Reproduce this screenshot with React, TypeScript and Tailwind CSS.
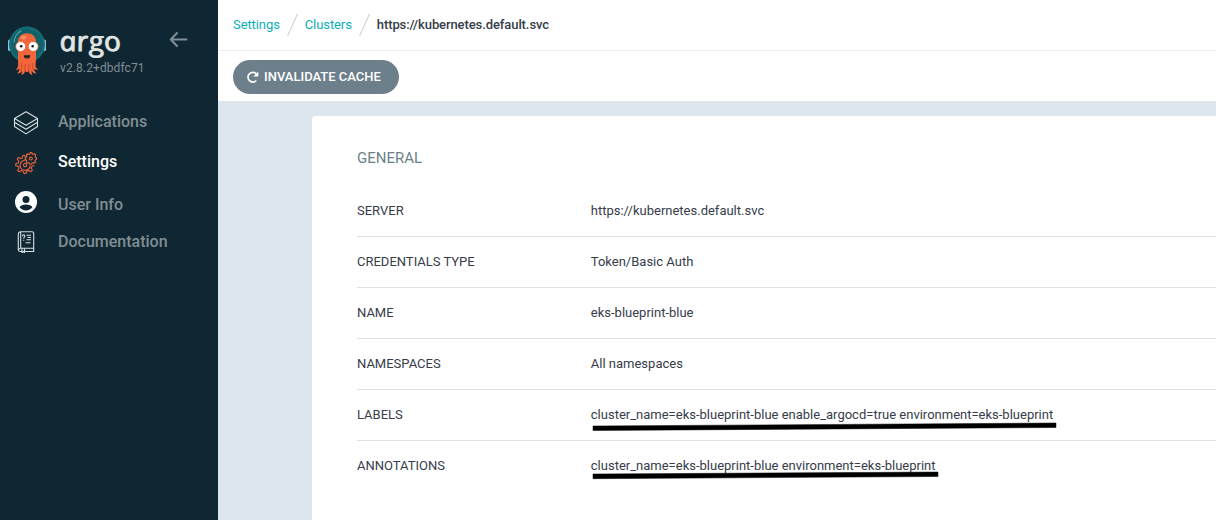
import React from 'react';

const details: { label: string; value: string; mark?: { width: number; top: number; points: string } }[] = [
  { label: 'SERVER', value: 'https://kubernetes.default.svc' },
  { label: 'CREDENTIALS TYPE', value: 'Token/Basic Auth' },
  { label: 'NAME', value: 'eks-blueprint-blue' },
  { label: 'NAMESPACES', value: 'All namespaces' },
  {
    label: 'LABELS',
    value: 'cluster_name=eks-blueprint-blue enable_argocd=true environment=eks-blueprint',
    mark: { width: 466, top: 32, points: '2,4 465,1 465,5.500 2,8.500' },
  },
  {
    label: 'ANNOTATIONS',
    value: 'cluster_name=eks-blueprint-blue environment=eks-blueprint',
    mark: { width: 348, top: 30, points: '2,3 347,1 347,5.500 2,7.700' },
  },
];

function Octopus() {
  return (
    <svg className="h-[52px] w-10 shrink-0" viewBox="0 0 40 52">
      <rect x="1" y="14.500" width="4" height="11.500" rx="1.500" fill="#8fc0dc" />
      <rect x="35" y="14.500" width="4" height="11.500" rx="1.500" fill="#8fc0dc" />
      <circle cx="20" cy="19.500" r="18" fill="#146b73" />
      <circle cx="20" cy="19.500" r="15.600" fill="#10626a" />
      <path d="M7 17c.6-5 3.200-9 7-11" fill="none" stroke="#5c9ca2" strokeWidth="1.200" strokeLinecap="round" />
      <path
        d="M20 8.200c-5.800 0-9 3.500-9 9V34c0 3 .3 5 0 7-.3 2-1.500 3-2.500 3.700 1.700.4 3-.1 4-.9-.1 1.700-.9 3.200-2.500 4.500 2.400.3 4.200-.8 5-2.600.1 1.700-.2 3-1 4.300 2.500-.3 3.800-2 4.200-4.500.3 1.500.8 1.500 1.600 1.500s1.300 0 1.600-1.500c.4 2.500 1.700 4.200 4.200 4.500-.8-1.300-1.100-2.600-1-4.300.8 1.800 2.600 2.900 5 2.600-1.600-1.300-2.400-2.800-2.500-4.500 1 .8 2.300 1.300 4 .9-1-.7-2.200-1.700-2.500-3.700-.3-2 .4-4 .4-7V17.200c0-5.500-3.200-9-9-9z"
        fill="#f1663b"
      />
      <path d="M14.700 38l-.5 7.500M18.200 39l-.3 7M21.800 39l.3 7M25.300 38l.5 7.500" fill="none" stroke="#c94427" strokeWidth=".8" />
      <ellipse cx="16.500" cy="12.500" rx="2.600" ry="2" fill="#fa8d68" />
      <circle cx="13.700" cy="21.500" r="5" fill="#fff" stroke="#e8532c" strokeWidth=".7" />
      <circle cx="26.200" cy="21.500" r="5" fill="#fff" stroke="#e8532c" strokeWidth=".7" />
      <circle cx="14.200" cy="21.300" r="1.300" fill="#111b20" />
      <circle cx="25.700" cy="21.300" r="1.300" fill="#111b20" />
      <path d="M16.800 30.300h6.400c-.3 5-6.100 5-6.400 0z" fill="#142229" />
      <path d="M18.300 33q1.700-1 3.300 0-1.600 1.300-3.300 0z" fill="#e65a4b" />
    </svg>
  );
}

function Layers() {
  return (
    <svg className="h-6 w-[26px]" viewBox="0 0 26 24" fill="none" stroke="#d7dfe1" strokeWidth="1.100" strokeLinejoin="round">
      <path d="M13 .7 24.500 7.500 13 14.300 1.500 7.500z" />
      <path d="M1.500 7.500v3.700L13 18.300l11.500-7.100V7.500" />
      <path d="M1.500 11.500v4L13 22.900l11.500-7.400v-4" />
    </svg>
  );
}

function Gears() {
  return (
    <svg className="h-[22px] w-[22px]" viewBox="0 0 24 24" fill="none" stroke="#ee6338" strokeWidth="1.200" strokeLinejoin="round">
      <path d="M11.500 5.500 10.200 3.500 8.500 4l-.5 2.500-1.500.7-2.800-1.200L2.500 7.500l1.700 2.700-.7 1.800-2.700.8v2.100l2.800.8.8 1.800-1.600 2.600 1.500 1.500 2.700-1.400 1.900.9.8 2.200h2.400l.8-2.300 2-.8 2.500 1.300 1.500-1.500-1.300-2.500.9-1.900 2.700-.8" />
      <path d="M11.500 9.100a5.500 5.500 0 1 0 5 5.500" />
      <circle cx="11" cy="14.300" r="1.800" />
      <path d="m16.200 2.300.3-1.600h2l.4 1.500 1.100.5 1.400-.8 1.300 1.400-.8 1.300.4 1.100 1.300.5v1.900l-1.400.4-.5 1.200.8 1.300-1.400 1.300-1.300-.7-1.200.5-.4 1.300h-1.800l-.5-1.300-1.200-.5-1.300.7-1.300-1.300.8-1.300-.5-1.200-1.300-.4V6.200l1.400-.4.500-1.200-.8-1.300 1.300-1.300 1.300.8z" />
      <circle cx="17.300" cy="7.100" r="1.600" />
    </svg>
  );
}

function UserIcon() {
  return (
    <svg className="h-[22px] w-[22px]" viewBox="0 0 22 22">
      <circle cx="11" cy="11" r="11" fill="#fff" />
      <circle cx="11" cy="8.500" r="3.500" fill="#0f2733" />
      <path d="M4.600 16.300c1.500-3.600 11.300-3.600 12.800 0-2.700 4.100-10.100 4.100-12.800 0z" fill="#0f2733" />
    </svg>
  );
}

function Manual() {
  return (
    <svg className="h-[22px] w-[18px]" viewBox="0 0 18 22" fill="none" stroke="#d7dfe1" strokeWidth="1.100">
      <path d="M16.700 17.300H3.500C.8 17.300.8 20.500 3.500 20.500H5M1.300 19V3.200C1.300 1.600 2.200.8 3.700.8h11.200c1 0 1.800.7 1.800 1.700v18H7.500M3.700 1v16.300" />
      <path d="M5 17.500v4l1.300-1 1.200 1v-4" />
      <path d="M9.500 4.300h4.500M10.500 6.500H14M9.500 8.700H14M8.500 11.800h5" />
      <path d="M5.500 5.300c0-2 2.600-1.700 2.300 0-.2 1-1.100 1-1.100 2.200M6.700 8.700v1" />
    </svg>
  );
}

const nav = [
  { label: 'Applications', icon: <Layers />, row: 'h-10', shift: 'mt-[2px]', color: 'text-[#818e94]' },
  { label: 'Settings', icon: <Gears />, row: 'h-10', shift: 'mt-[2px]', color: 'text-white' },
  { label: 'User Info', icon: <UserIcon />, row: 'h-[45px]', shift: 'mb-[5px]', color: 'text-[#818e94]' },
  { label: 'Documentation', icon: <Manual />, row: 'h-[30px]', shift: 'mt-0', color: 'text-[#818e94]' },
];

function Sidebar() {
  return (
    <aside className="flex w-[218px] shrink-0 flex-col bg-[#0f2733]">
      <div className="flex h-[102px] items-start pl-[7px] pt-[25px]">
        <Octopus />
        <div className="ml-[13px] w-[84px]">
          <svg className="h-9 w-[64px] overflow-visible" viewBox="0 0 64 36">
            <text
              transform="translate(1 26) skewX(12)"
              textLength="61.5"
              lengthAdjust="spacingAndGlyphs"
              fill="#e1e5e4"
              stroke="#e1e5e4"
              strokeWidth=".8"
              strokeLinejoin="round"
              fontFamily="Open Sans, sans-serif"
              fontSize="27.5"
              fontStyle="italic"
              fontWeight="500"
            >
              argo
            </text>
          </svg>
          <div className="text-xs leading-[14px] tracking-[0.1px] text-[#818e94]">v2.8.2+dbdfc71</div>
        </div>
        <svg className="ml-[25px] mt-[6px] h-[17px] w-5" viewBox="0 0 20 17" fill="none" stroke="#818e94" strokeWidth="2" strokeLinecap="round" strokeLinejoin="round">
          <path d="M8 2 1.800 8.500 8 15M2.500 8.500H17.500" />
        </svg>
      </div>
      <nav>
        {nav.map((item) => (
          <div key={item.label} className={`flex items-center ${item.row} ${item.color}`}>
            <span className={`flex w-[52px] justify-center ${item.shift}`}>{item.icon}</span>
            <span className="pl-[6px] text-base font-medium leading-5">{item.label}</span>
          </div>
        ))}
      </nav>
    </aside>
  );
}

function Slash() {
  return (
    <svg className="mx-[7px] h-[22px] w-[11px]" viewBox="0 0 11 22">
      <path d="M10.500 0 .5 22" stroke="#ccd6dd" strokeWidth="1.200" />
    </svg>
  );
}

export default function App() {
  return (
    <div className="flex h-[520px] w-[1216px] overflow-hidden bg-[#dee6ed] font-['Roboto',sans-serif] text-[13px] text-[#363c4a]">
      <Sidebar />
      <main className="flex min-w-0 grow flex-col">
        <div className="flex h-[51px] shrink-0 items-center border-b border-[#eceff1] bg-white pl-[15px] tracking-[-0.09px] text-[#0dadb8]">
          <span>Settings</span>
          <Slash />
          <span>Clusters</span>
          <Slash />
          <span className="font-medium text-[#363c4a]">https://kubernetes.default.svc</span>
        </div>
        <div className="flex h-[51px] shrink-0 items-center border-b border-[#dee6ed] bg-white pl-[15px]">
          <button className="mt-[2px] flex h-[34px] w-[166px] items-center rounded-full bg-[#6d7f8b] pl-[13px] font-medium text-white">
            <svg className="mr-[5px] h-[13px] w-[13px]" viewBox="0 0 13 13" fill="none" stroke="white" strokeWidth="1.700">
              <path d="M10.300 9.500A4.800 4.800 0 1 1 10.300 3" />
              <path d="M12.300.5v4.900H7.400z" fill="white" stroke="none" />
            </svg>
            INVALIDATE CACHE
          </button>
        </div>
        <section className="ml-[94px] mt-[14px] grow rounded-tl-[4px] bg-white pl-[45px] pt-[32px]">
          <h2 className="h-[38px] text-[15px] leading-5 text-[#6d7f8b]">GENERAL</h2>
          {details.map((row, i) => (
            <div key={row.label} className={`flex h-[51px] items-center border-b ${i < details.length - 1 ? 'border-[#dee2e6]' : 'border-transparent'}`}>
              <span className="w-[233.800px] shrink-0">{row.label}</span>
              <div className="relative flex h-[50px] items-center whitespace-nowrap">
                {row.value}
                {row.mark && (
                  <svg className="absolute left-0" style={{ top: row.mark.top, width: row.mark.width, height: 11 }} viewBox={`0 0 ${row.mark.width} 11`}>
                    <polygon points={row.mark.points} fill="#000" stroke="#000" strokeWidth=".5" />
                  </svg>
                )}
              </div>
            </div>
          ))}
        </section>
      </main>
    </div>
  );
}
